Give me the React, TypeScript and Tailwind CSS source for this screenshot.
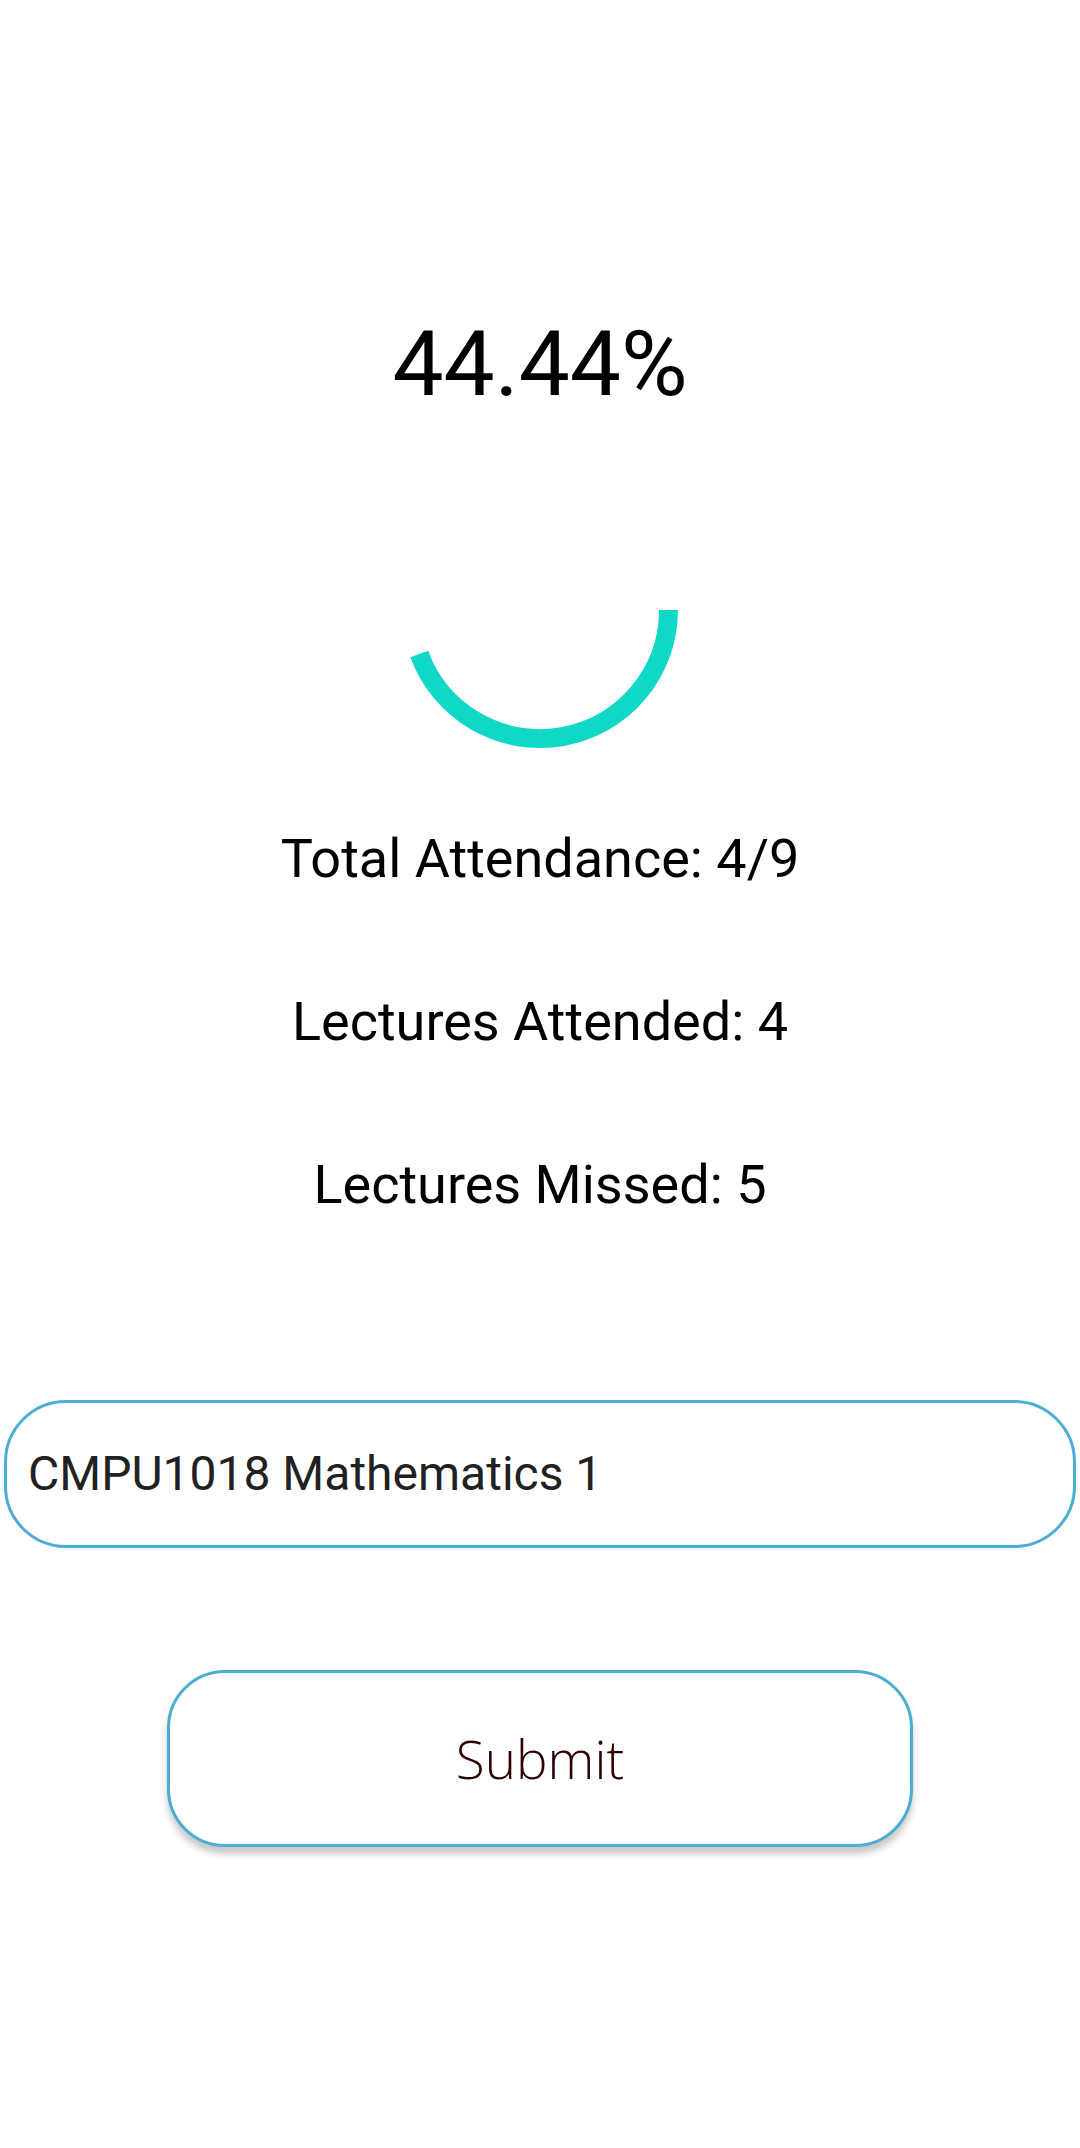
import React from "react";

export default function App() {
  const cx = 138;
  const cy = 138;
  const r = 128.5;
  const pct = 44.44;
  const ang = (pct / 100) * 2 * Math.PI;
  const ex = cx + r * Math.cos(ang);
  const ey = cy + r * Math.sin(ang);
  const large = pct > 50 ? 1 : 0;
  return (
    <div
      className="min-h-[2148px] w-full bg-white flex flex-col items-center text-black"
      style={{ fontFamily: "Roboto, 'Noto Sans', sans-serif" }}
    >
      <div className="pt-[319px] text-[91px] leading-none">44.44%</div>
      <svg className="mt-[62px]" width="276" height="276" viewBox="0 0 276 276">
        <path
          d={`M ${cx + r} ${cy} A ${r} ${r} 0 ${large} 1 ${ex} ${ey}`}
          fill="none"
          stroke="#0fd9c6"
          strokeWidth="19"
          strokeLinecap="butt"
        />
      </svg>
      <div className="mt-[84px] flex flex-col items-center gap-[109px] text-[54px] leading-none">
        <div>Total Attendance: 4/9</div>
        <div>Lectures Attended: 4</div>
        <div>Lectures Missed: 5</div>
      </div>
      <div className="mt-[188px] w-full px-[4px]">
        <div className="h-[148px] w-full rounded-[62px] border-[3px] border-[#4aaed2] flex items-center pl-[21px] text-[48px] leading-none text-[#212121]">
          CMPU1018 Mathematics 1
        </div>
      </div>
      <button
        className="mt-[122px] w-[746px] h-[177px] rounded-[58px] border-[3px] border-[#4aaed2] bg-white flex items-center justify-center text-[53px] font-light leading-none text-[#300000] shadow-[0_7px_7px_rgba(0,0,0,0.22)]"
        style={{ fontFamily: "'Open Sans', Lato, sans-serif" }}
      >
        Submit
      </button>
    </div>
  );
}
